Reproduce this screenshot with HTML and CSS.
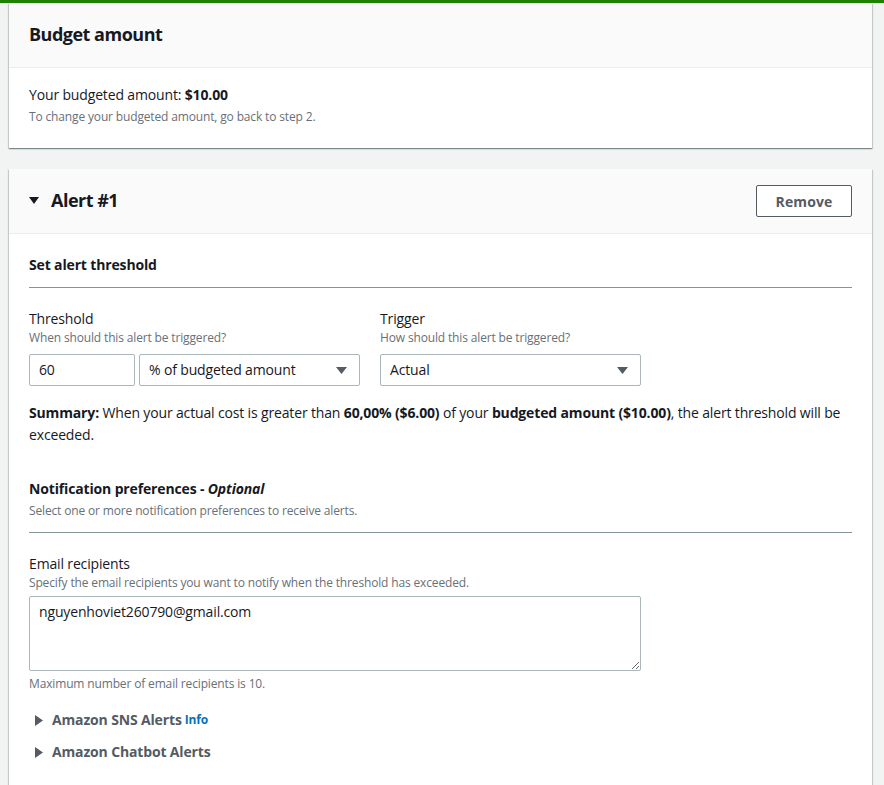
FILE: index.html
```html
<!DOCTYPE html>
<html lang="en">
<head>
<meta charset="utf-8">
<title>Configure alerts</title>
<link rel="stylesheet" href="styles.css">
</head>
<body>
<div class="topbar"></div>
<main class="page">
  <section class="card">
    <header class="card-header">
      <h2 class="card-title">Budget amount</h2>
    </header>
    <div class="card-body budget-body">
      <p class="budget-line">Your budgeted amount: <strong>$10.00</strong></p>
      <p class="hint">To change your budgeted amount, go back to step 2.</p>
    </div>
  </section>

  <section class="card">
    <header class="card-header alert-header">
      <div class="alert-title">
        <svg class="caret-down" width="10" height="8" viewBox="0 0 10 8"><path d="M0 0h10L5 7z" fill="#16191f"/></svg>
        <h2 class="card-title">Alert #1</h2>
      </div>
      <button class="btn" type="button">Remove</button>
    </header>
    <div class="card-body alert-body">
      <div class="section-head">
        <h3 class="section-title">Set alert threshold</h3>
      </div>

      <div class="fields">
        <div class="field field-threshold">
          <div class="label">Threshold</div>
          <div class="desc">When should this alert be triggered?</div>
          <div class="controls">
            <div class="input input-num">60</div>
            <div class="input select select-unit">
              <span>% of budgeted amount</span>
              <svg class="arrow" width="11" height="7" viewBox="0 0 11 7"><path d="M0 0h11L5.5 7z" fill="#545b64"/></svg>
            </div>
          </div>
        </div>
        <div class="field field-trigger">
          <div class="label">Trigger</div>
          <div class="desc">How should this alert be triggered?</div>
          <div class="controls">
            <div class="input select select-trigger">
              <span>Actual</span>
              <svg class="arrow" width="11" height="7" viewBox="0 0 11 7"><path d="M0 0h11L5.5 7z" fill="#545b64"/></svg>
            </div>
          </div>
        </div>
      </div>

      <p class="summary"><strong>Summary:</strong> When your actual cost is greater than <strong>60,00% ($6.00)</strong> of your <strong>budgeted amount ($10.00)</strong>, the alert threshold will be exceeded.</p>

      <div class="section-head notif-head">
        <h3 class="section-title">Notification preferences - <em>Optional</em></h3>
        <p class="hint section-desc">Select one or more notification preferences to receive alerts.</p>
      </div>

      <div class="field email-field">
        <div class="label">Email recipients</div>
        <div class="desc">Specify the email recipients you want to notify when the threshold has exceeded.</div>
        <textarea class="textarea">nguyenhoviet260790@gmail.com</textarea>
        <div class="desc constraint">Maximum number of email recipients is 10.</div>
      </div>

      <div class="expanders">
        <div class="expander">
          <svg class="caret-right" width="8" height="11" viewBox="0 0 8 11"><path d="M0 0v11l8-5.5z" fill="#545b64"/></svg>
          <span class="exp-title">Amazon SNS Alerts</span>
          <a class="info" href="#">Info</a>
        </div>
        <div class="expander">
          <svg class="caret-right" width="8" height="11" viewBox="0 0 8 11"><path d="M0 0v11l8-5.5z" fill="#545b64"/></svg>
          <span class="exp-title">Amazon Chatbot Alerts</span>
        </div>
      </div>
    </div>
  </section>
</main>
</body>
</html>
```

FILE: styles.css
```css
* { box-sizing: border-box; }

html, body {
  margin: 0;
  padding: 0;
}

body {
  background: #f2f3f3;
  font-family: "Open Sans", "Noto Sans", Arial, sans-serif;
  font-size: 14px;
  line-height: 22px;
  letter-spacing: -0.15px;
  color: #16191f;
  height: 785px;
  overflow: hidden;
}

.topbar {
  height: 3px;
  background: #1d8102;
}

.page {
  padding: 0 12px 0 9px;
}

.card {
  background: #fff;
  box-shadow: 0 1px 1px 0 rgba(0, 28, 36, 0.3), 1px 1px 1px 0 rgba(0, 28, 36, 0.15), -1px 1px 1px 0 rgba(0, 28, 36, 0.15);
  margin-bottom: 21px;
}

.card-header {
  background: #fafafa;
  border-bottom: 1px solid #eaeded;
  height: 65px;
  padding: 0 20px;
  display: flex;
  align-items: center;
}

.card-title {
  margin: 0 0 3px;
  font-size: 18px;
  font-weight: 700;
  line-height: 22px;
  letter-spacing: -0.5px;
}

.card-body {
  padding: 0 20px;
}

.budget-body {
  padding-top: 16px;
  padding-bottom: 23px;
}

.budget-line {
  margin: 0;
}

.hint {
  margin: 0;
  font-size: 12px;
  line-height: 16px;
  color: #687078;
}

.budget-body .hint { margin-top: 3px; }

.alert-header {
  justify-content: space-between;
  padding-right: 20px;
}

.alert-title {
  display: flex;
  align-items: center;
  gap: 12px;
}

.btn {
  width: 96px;
  height: 32px;
  background: #fff;
  border: 1px solid #545b64;
  border-radius: 2px;
  color: #545b64;
  font-family: inherit;
  font-size: 14px;
  font-weight: 700;
  letter-spacing: 0.1px;
  cursor: pointer;
}

.alert-body {
  padding-top: 20px;
  padding-bottom: 40px;
}

.section-head {
  border-bottom: 1px solid #879596;
  padding-bottom: 11px;
}

.section-title {
  margin: 0;
  font-size: 14px;
  font-weight: 700;
  line-height: 22px;
}

.section-title em { font-style: italic; }

.fields {
  display: flex;
  gap: 20px;
  margin-top: 20px;
}

.label {
  font-size: 14px;
  line-height: 22px;
}

.desc {
  font-size: 12px;
  line-height: 16px;
  color: #687078;
}

.controls {
  display: flex;
  gap: 4px;
  margin-top: 8px;
}

.input {
  height: 32px;
  border: 1px solid #aab7b8;
  border-radius: 2px;
  padding: 0 9px;
  display: flex;
  align-items: center;
  background: #fff;
}

.input-num { width: 106px; }

.select {
  justify-content: space-between;
  padding-right: 12px;
}

.select-unit { width: 221px; }
.select-trigger { width: 261px; }

.summary {
  margin: 16px 0 0;
}

.notif-head {
  margin-top: 32px;
  padding-bottom: 13px;
}

.section-desc { margin-top: 3px; }

.email-field {
  margin-top: 20px;
}

.textarea {
  display: block;
  width: 612px;
  height: 75px;
  margin-top: 5px;
  border: 1px solid #aab7b8;
  border-radius: 2px;
  padding: 4px 9px;
  font-family: inherit;
  font-size: 14px;
  line-height: 22px;
  letter-spacing: -0.15px;
  color: #16191f;
  resize: vertical;
}

.constraint {
  margin-top: 5px;
}

.expanders {
  margin-top: 12px;
}

.expander {
  display: flex;
  align-items: center;
  height: 32px;
  padding-left: 6px;
  gap: 9px;
  color: #545b64;
}

.exp-title {
  font-weight: 700;
  font-size: 14px;
}

.info {
  font-size: 12px;
  font-weight: 700;
  color: #0073bb;
  text-decoration: none;
  margin-left: -6px;
}
```
